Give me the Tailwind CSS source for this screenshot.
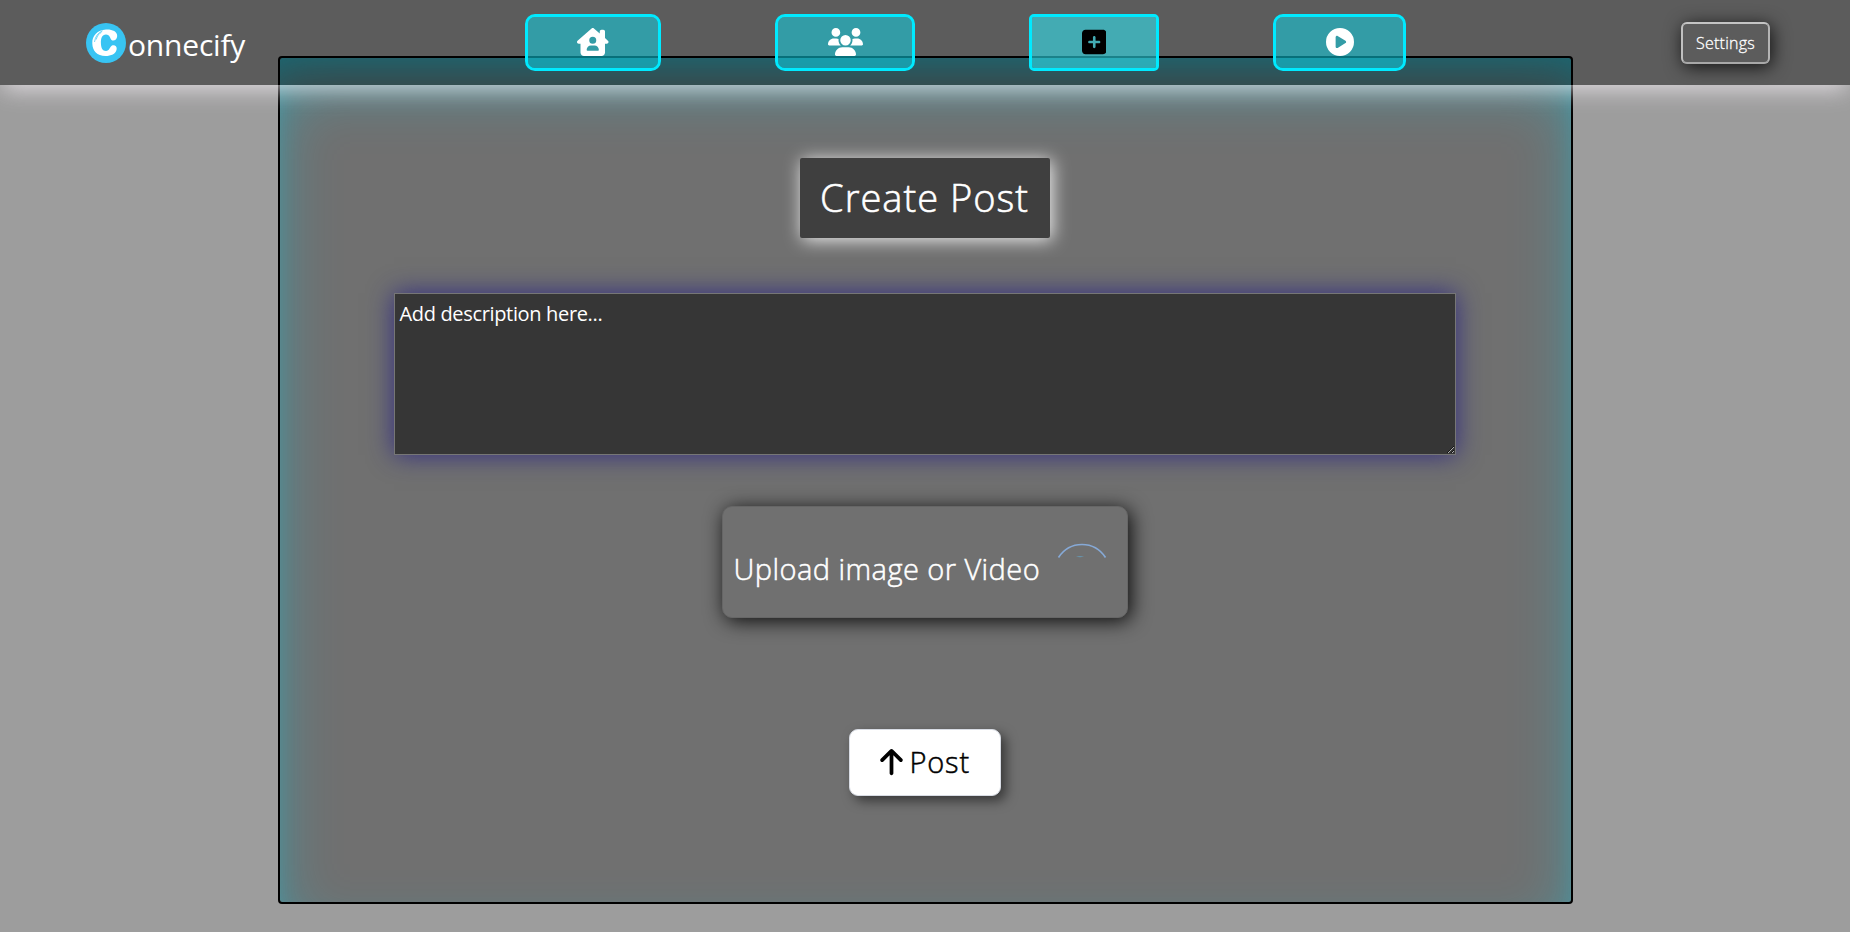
<!DOCTYPE html>
<html lang="en">
<head>
<meta charset="utf-8">
<title>Connecify</title>
<script src="https://cdn.jsdelivr.net/npm/@tailwindcss/browser@4"></script>
</head>
<body class="h-[932px] overflow-hidden bg-[#9d9d9d] font-['Open_Sans','Noto_Sans',sans-serif] font-light text-white">
<header class="relative z-10 flex h-[85px] items-start bg-black/41 pl-[86px] shadow-[0_7px_22px_-3px_rgba(245,238,245,0.78)]">
  <div class="mt-[23px] flex h-10 w-[175px] shrink-0">
    <svg class="size-10 shrink-0" viewBox="0 0 40 40">
      <circle cx="20" cy="20" r="20" fill="#38c4f3"/>
      <path d="M20 6.500C25 6 31.500 8 31.200 13C31 17 27.500 18.500 25.500 17C24 15.500 24 11.500 20 11.500C16 11.500 14.800 15.500 14.900 20C15 25 16.500 28 20 28C23.500 28 23.500 24 26 22.500C28.500 21.500 31 23 30.700 26C30 31 25 33 19.500 33C11 33 6.500 28 6.300 20.500C6 12.500 11.500 7 20 6.500Z" fill="#fff"/>
      <path d="M8.500 19C9.200 13.500 12 9.800 16.500 7.800M10.200 16.500C11.200 12.700 13 10.600 15.500 9.200" fill="none" stroke="#38c4f3" stroke-width=".7"/>
    </svg>
    <span class="ml-[2px] mt-[4px] text-[30px] leading-9 font-normal tracking-[-0.2px]">onnecify</span>
  </div>
  <nav class="ml-[264px] mt-[14px] flex gap-[114px]">
    <a class="flex h-[57px] w-[136px] items-center justify-center rounded-[10px] border-3 border-[#00eaff] bg-[rgba(14,214,233,0.52)] bg-clip-padding"><svg class="mb-[2px] h-7 w-[31.500px]" viewBox="0 0 576 512" fill="currentColor"><path d="M543.8 287.6c17 0 32-14 32-32.1c1-9-3-17-11-24L512 185V64c0-17.7-14.3-32-32-32H448c-17.7 0-32 14.3-32 32v36.7L309.500 7c-6-5-14-7-21-7s-15 1-22 8L10 231.500c-7 7-10 15-10 24c0 18 14 32.1 32 32.1h32V448c0 35.3 28.7 64 64 64H448.500c35.500 0 64.2-28.8 64-64.3l-.7-160.2h32zM288 160a64 64 0 1 1 0 128 64 64 0 1 1 0-128zM176 400c0-44.2 35.8-80 80-80h64c44.2 0 80 35.8 80 80c0 8.8-7.2 16-16 16H192c-8.8 0-16-7.2-16-16z"/></svg></a>
    <a class="flex h-[57px] w-[140px] items-center justify-center rounded-[10px] border-3 border-[#00eaff] bg-[rgba(14,214,233,0.52)] bg-clip-padding"><svg class="mb-[2px] h-7 w-[35px]" viewBox="0 0 640 512" fill="currentColor"><path d="M144 0a80 80 0 1 1 0 160A80 80 0 1 1 144 0zM512 0a80 80 0 1 1 0 160A80 80 0 1 1 512 0zM0 298.7C0 239.8 47.8 192 106.7 192h42.7c15.9 0 31 3.500 44.6 9.700c-1.300 7.200-1.900 14.700-1.900 22.300c0 38.2 16.8 72.500 43.3 96c-.2 0-.4 0-.7 0H21.3C9.600 320 0 310.4 0 298.7zM405.3 320c-.2 0-.4 0-.7 0c26.6-23.500 43.3-57.8 43.3-96c0-7.600-.7-15-1.900-22.3c13.6-6.300 28.7-9.700 44.6-9.700h42.7C592.2 192 640 239.8 640 298.7c0 11.8-9.600 21.3-21.3 21.3H405.3zM224 224a96 96 0 1 1 192 0 96 96 0 1 1 -192 0zM128 485.3C128 411.7 187.7 352 261.3 352H378.7C452.3 352 512 411.7 512 485.3c0 14.7-11.9 26.7-26.7 26.7H154.7c-14.7 0-26.7-11.9-26.7-26.7z"/></svg></a>
    <a class="flex h-[57px] w-[130px] items-center justify-center rounded-[5px] border-3 border-[#00eaff] bg-[rgba(48,236,252,0.55)] bg-clip-padding text-black"><svg class="mb-[2px] h-7 w-[24.500px]" viewBox="0 0 448 512" fill="currentColor"><path d="M64 32C28.700 32 0 60.7 0 96V416c0 35.3 28.7 64 64 64H384c35.3 0 64-28.7 64-64V96c0-35.3-28.7-64-64-64H64zM200 344V280H136c-13.3 0-24-10.7-24-24s10.700-24 24-24h64V168c0-13.3 10.7-24 24-24s24 10.7 24 24v64h64c13.3 0 24 10.7 24 24s-10.7 24-24 24H248v64c0 13.3-10.7 24-24 24s-24-10.7-24-24z"/></svg></a>
    <a class="flex h-[57px] w-[133px] items-center justify-center rounded-[10px] border-3 border-[#00eaff] bg-[rgba(14,214,233,0.52)] bg-clip-padding"><svg class="mb-[2px] size-7" viewBox="0 0 512 512" fill="currentColor"><path d="M0 256a256 256 0 1 1 512 0A256 256 0 1 1 0 256zM188.3 147.1c-7.600 4.200-12.300 12.3-12.3 20.9V344c0 8.700 4.700 16.7 12.3 20.9s16.8 4.100 24.3-.5l144-88c7.100-4.400 11.5-12.1 11.5-20.5s-4.400-16.1-11.5-20.5l-144-88c-7.400-4.500-16.7-4.700-24.3-.5z"/></svg></a>
  </nav>
  <button class="ml-[275px] mt-[22px] h-[42px] w-[89px] rounded-[6px] border-2 border-t-[#c4c4c4] border-r-[#b4b4b4] border-b-[#a8a8a8] border-l-[#c0c0c0] text-[16px] font-light tracking-[0.25px] shadow-[2px_3px_18px_rgba(0,0,0,0.8)] [-webkit-text-stroke:0.3px_white]">Settings</button>
</header>
<main class="-mt-[29px] ml-[278px] flex h-[848px] w-[1295px] flex-col items-center rounded-[4px] border-2 border-black bg-[#707070] pt-[100px] pr-[2px] shadow-[inset_0_32px_70px_-14px_rgba(0,220,250,0.46),inset_0_18px_36px_-18px_rgba(0,220,250,0.42)]">
  <h1 class="flex h-20 w-[250px] items-center justify-center rounded-[2px] bg-[#3f3f3f] pb-[2px] text-[38px] tracking-[1px] whitespace-nowrap shadow-[2px_2px_18px_rgba(255,255,255,0.9)] [-webkit-text-stroke:0.6px_white]">Create Post</h1>
  <textarea class="mt-[55px] block h-[162px] w-[1062px] shrink-0 border border-[#767676] bg-[#363636] px-[5px] py-[6px] text-[20px] leading-[28px] font-normal tracking-[-0.34px] shadow-[0_0_24px_rgba(42,35,130,0.9)] placeholder:text-white" placeholder="Add description here..."></textarea>
  <label class="mt-[51px] flex h-[112px] w-[406px] shrink-0 items-start rounded-[10px] border border-[#666] bg-[#707070] pl-[11px] shadow-[3px_3px_20px_rgba(0,0,0,0.9)]">
    <span class="mt-[42px] w-[308px] text-[29px] leading-[40px] tracking-[0.45px] whitespace-nowrap [-webkit-text-stroke:0.5px_white]">Upload image or Video</span>
    <svg class="ml-[15px] mt-[36px] h-4 w-[50px]" viewBox="0 0 50 16" fill="none"><path d="M1.500 14.500Q10 1.500 25 1.500T48.500 14.500" stroke="#86a9d6" stroke-width="1.700"/><path d="M19 13.500Q23 12.500 27 13.500Q23 15 19 13.500Z" fill="#6794ad"/></svg>
  </label>
  <button class="mt-[111px] flex h-[67px] w-[152px] shrink-0 items-center rounded-[9px] border border-[#d8dce4] bg-white pb-[2px] pl-[30px] text-[29px] font-light text-black shadow-[5px_5px_12px_rgba(0,0,0,0.5)]">
    <svg class="mr-[7px] h-[30px] w-[23px]" viewBox="0 0 384 512" fill="currentColor"><path d="M214.6 41.4c-12.500-12.5-32.8-12.5-45.3 0l-160 160c-12.5 12.5-12.5 32.8 0 45.3s32.8 12.5 45.3 0L160 141.2V448c0 17.7 14.3 32 32 32s32-14.3 32-32V141.2L329.4 246.6c12.5 12.5 32.8 12.5 45.3 0s12.5-32.8 0-45.3l-160-160z"/></svg>
    <span class="tracking-[0.8px] [-webkit-text-stroke:0.5px_black]">Post</span>
  </button>
</main>
</body>
</html>
